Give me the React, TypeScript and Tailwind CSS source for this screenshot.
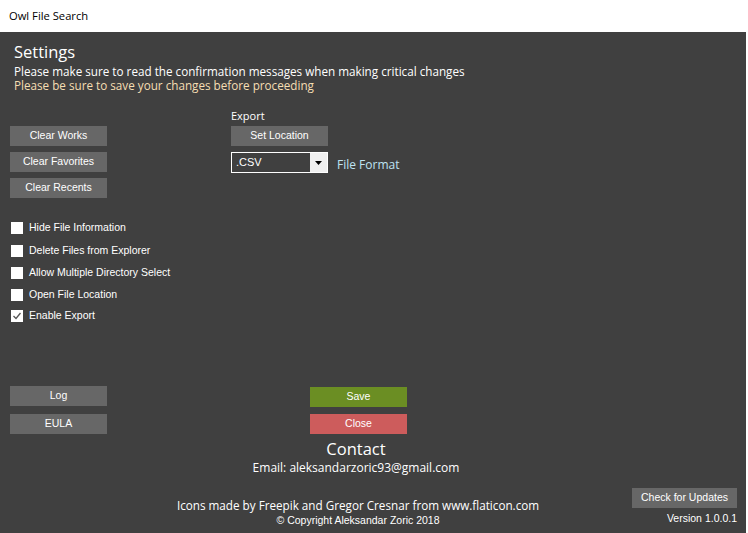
const segoe = "font-['Open_Sans',sans-serif]";
const mss = "font-['Liberation_Sans',Arial,sans-serif]";

const leftButtons = ["Clear Works", "Clear Favorites", "Clear Recents"];

const options = [
  { label: "Hide File Information", checked: false, h: "h-[23px]" },
  { label: "Delete Files from Explorer", checked: false, h: "h-[23px]" },
  { label: "Allow Multiple Directory Select", checked: false, h: "h-[22px]" },
  { label: "Open File Location", checked: false, h: "h-[21px]" },
  { label: "Enable Export", checked: true, h: "h-[21px]" },
];

function Btn({ label, color = "bg-[#676767]", w = "w-[97px]" }: { label: string; color?: string; w?: string }) {
  return (
    <div className={`${w} h-[20px] ${color} flex items-center justify-center text-[10.5px] text-white ${mss}`}>
      {label}
    </div>
  );
}

function Check({ checked }: { checked: boolean }) {
  return (
    <div className="w-[12px] h-[12px] bg-white flex items-center justify-center">
      {checked && (
        <svg width="10" height="10" viewBox="0 0 10 10">
          <path d="M1.5 5 L4 7.5 L8.5 2" fill="none" stroke="#555" strokeWidth="1.3" />
        </svg>
      )}
    </div>
  );
}

export default function App() {
  return (
    <div className="w-[748px] h-[533px] bg-white overflow-hidden">
      <div className={`h-[32px] pl-[9px] flex items-center text-[11.2px] text-black ${segoe}`}>Owl File Search</div>
      <div className="w-[746px] h-[501px] bg-[#404040] text-white">
        <div className={`pl-[14px] pt-[8px] ${segoe}`}>
          <div className="text-[16.5px] leading-[24px]">Settings</div>
          <div className="text-[11.7px] leading-[14px]">Please make sure to read the confirmation messages when making critical changes</div>
          <div className="text-[11.7px] leading-[14px] text-[#f5deb3]">Please be sure to save your changes before proceeding</div>
        </div>

        <div className="flex mt-[17px]">
          <div className="w-[231px] pl-[10px] pt-[17px] flex flex-col gap-[6px]">
            {leftButtons.map((b) => (
              <Btn key={b} label={b} />
            ))}
          </div>
          <div className="flex flex-col">
            <div className={`text-[11px] leading-[14px] h-[17px] ${segoe}`}>Export</div>
            <Btn label="Set Location" />
            <div className="flex items-end mt-[6px]">
              <div className="w-[97px] h-[21px] border border-white flex">
                <div className={`flex-1 pl-[4px] flex items-center text-[11px] ${mss}`}>.CSV</div>
                <div className="w-[17px] bg-[#f0f0f0] flex items-center justify-center">
                  <svg width="7" height="4" viewBox="0 0 7 4">
                    <path d="M0 0 H7 L3.5 4 Z" fill="#000" />
                  </svg>
                </div>
              </div>
              <div className={`ml-[9px] text-[12px] leading-[16px] text-[#bfe3f2] ${segoe}`}>File Format</div>
            </div>
          </div>
        </div>

        <div className="mt-[18px] pl-[11px] flex flex-col">
          {options.map((o) => (
            <div key={o.label} className={`${o.h} flex items-center gap-[6px] text-[10.5px] ${mss}`}>
              <Check checked={o.checked} />
              <span>{o.label}</span>
            </div>
          ))}
        </div>

        <div className="mt-[60px] flex">
          <div className="pl-[10px] w-[310px] flex flex-col gap-[8px]">
            <Btn label="Log" />
            <Btn label="EULA" />
          </div>
          <div className="flex flex-col gap-[7px] pt-[1px]">
            <Btn label="Save" color="bg-[#6b8e23]" />
            <Btn label="Close" color="bg-[#cd5c5c]" />
          </div>
        </div>

        <div className="flex mt-[4px]">
          <div className="w-[632px] flex flex-col items-center pl-[80px]">
            <div className={`text-[16.5px] leading-[22px] ${segoe}`}>Contact</div>
            <div className={`text-[12px] leading-[16px] ${segoe}`}>Email: aleksandarzoric93@gmail.com</div>
            <div className={`mt-[21px] pl-[4px] text-[11.7px] leading-[16px] ${segoe}`}>Icons made by Freepik and Gregor Cresnar from www.flaticon.com</div>
            <div className={`pl-[4px] text-[10.5px] leading-[14px] ${mss}`}>© Copyright Aleksandar Zoric 2018</div>
          </div>
          <div className="flex flex-col items-end pt-[50px]">
            <Btn label="Check for Updates" w="w-[105px]" />
            <div className={`mt-[3px] text-[10.5px] leading-[14px] ${mss}`}>Version 1.0.0.1</div>
          </div>
        </div>
      </div>
    </div>
  );
}
